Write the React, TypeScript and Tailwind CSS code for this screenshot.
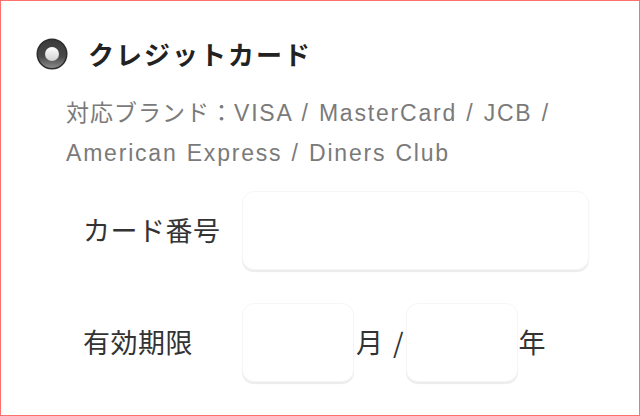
import React from "react";

function Radio() {
  return (
    <svg width="32" height="32" viewBox="0 0 32 32" className="shrink-0">
      <defs>
        <linearGradient id="outer" x1="0" y1="0" x2="0" y2="1">
          <stop offset="0" stopColor="#3a3a3a" />
          <stop offset="0.6" stopColor="#4a4a4a" />
          <stop offset="1" stopColor="#8a8a8a" />
        </linearGradient>
        <linearGradient id="inner" x1="0" y1="0" x2="0" y2="1">
          <stop offset="0" stopColor="#ffffff" />
          <stop offset="1" stopColor="#d0d0d0" />
        </linearGradient>
      </defs>
      <circle cx="16" cy="16" r="15.5" fill="#2c2c2c" />
      <circle cx="16" cy="16" r="14" fill="url(#outer)" />
      <circle cx="16" cy="16" r="7" fill="url(#inner)" />
    </svg>
  );
}

function Field({ className }: { className: string }) {
  return (
    <div
      className={`${className} rounded-[12px] bg-white border border-[#f6f6f6] shadow-[0_2px_1px_rgba(0,0,0,0.08)]`}
    />
  );
}

export default function App() {
  return (
    <div
      className="w-[640px] h-[416px] bg-white border border-[#ff7070] overflow-hidden text-[#222]"
      style={{ fontFamily: '"Noto Sans CJK JP", "Noto Sans", sans-serif' }}
    >
      <div className="flex items-center pl-[35px] pt-[37px] h-[69px]">
        <Radio />
        <span className="ml-[20px] text-[26px] font-bold leading-[32px] tracking-[2px]">
          クレジットカード
        </span>
      </div>
      <div
        className="ml-[65px] mt-[23px] text-[23px] leading-[40px] tracking-[1px] text-[#7a7a7a]"
        style={{ fontFamily: '"Liberation Sans", "Noto Sans CJK JP", sans-serif' }}
      >
        対応ブランド：
        <span className="tracking-[1.8px] [word-spacing:1px]">VISA / MasterCard / JCB /</span>
        <br />
        <span className="tracking-[1.8px] [word-spacing:1px]">American Express / Diners Club</span>
      </div>
      <div className="mt-[18px] flex items-center">
        <div className="w-[241px] pl-[82px] text-[27px] tracking-[0.5px] text-[#333]">カード番号</div>
        <Field className="w-[347px] h-[79px]" />
      </div>
      <div className="mt-[33px] flex items-center text-[27px] text-[#333]">
        <div className="w-[241px] pl-[82px] tracking-[0.5px]">有効期限</div>
        <Field className="w-[112px] h-[79px]" />
        <span className="ml-[2px]">月</span>
        <span className="ml-[10px]">/</span>
        <Field className="ml-[2px] w-[112px] h-[79px]" />
        <span className="ml-[1px]">年</span>
      </div>
    </div>
  );
}
